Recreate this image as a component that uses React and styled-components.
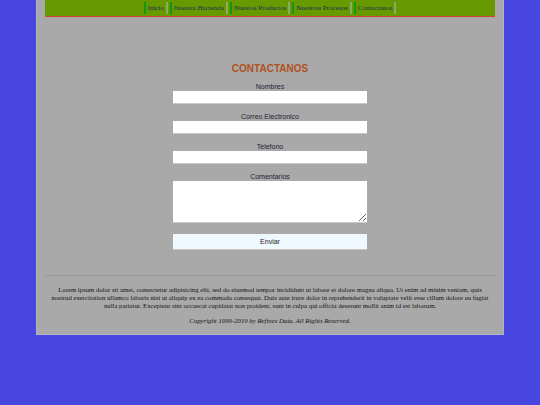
import React from "react";
import styled, { createGlobalStyle } from "styled-components";

const GlobalStyle = createGlobalStyle`
  body {
    margin: 0;
    background: #4747df;
  }
`;

//page frame
const Page = styled.div`
  width: 450px;
  height: 334px;
  margin: 0 auto;
  padding: 0 8px;
  background: #a9a9a9;
  border: 1px solid #b4b4c8;
  border-top: none;
  box-sizing: content-box;
  display: flex;
  flex-direction: column;
`;

const NavBar = styled.nav`
  height: 16px;
  background: #669a00;
  border-bottom: 1px solid #d2452a;
  display: flex;
  justify-content: center;
  align-items: center;
`;

const NavItem = styled.a`
  font-family: "Liberation Serif", serif;
  font-size: 7px;
  line-height: 12px;
  color: #1c2a5a;
  text-decoration: none;
  padding: 0 2px;
  margin: 0 1px;
  border-left: 2px solid #0a9a0a;
  border-right: 2px solid #92a86a;
`;

const Form = styled.form`
  width: 194px;
  margin: 46px auto 0;
  display: flex;
  flex-direction: column;
  align-items: stretch;
`;

const Title = styled.h2`
  margin: 0 0 8px;
  font-family: "Liberation Sans", Arial, sans-serif;
  font-size: 10px;
  line-height: 12px;
  font-weight: bold;
  color: #b1501c;
  text-align: center;
`;

const Label = styled.label`
  font-family: "Liberation Sans", Arial, sans-serif;
  font-size: 7px;
  line-height: 8px;
  color: #1e1e36;
  text-align: center;
`;

const Input = styled.input`
  height: 13px;
  margin: 0 0 9px;
  padding: 0;
  border: none;
  border-bottom: 1px solid #c8c8c8;
  background: #fff;
  box-sizing: border-box;
`;

const TextArea = styled.textarea`
  height: 42px;
  margin: 0 0 11px;
  padding: 0;
  border: none;
  border-bottom: 1px solid #c8c8c8;
  background: #fff;
  box-sizing: border-box;
`;

const Button = styled.button`
  height: 16px;
  padding: 0;
  border: none;
  border-bottom: 1px solid #c8c8c8;
  background: #f0f8ff;
  font-family: "Liberation Sans", Arial, sans-serif;
  font-size: 7px;
  color: #222;
`;

const Rule = styled.hr`
  margin: 25px 0 0;
  border: none;
  border-top: 1px solid #999;
`;

const Footer = styled.footer`
  padding: 10px 4px 0;
  text-align: center;
  font-family: "Liberation Serif", serif;
  color: #141414;
`;

const FooterText = styled.p`
  margin: 0;
  font-size: 6.75px;
  line-height: 8px;
  font-style: ${(p) => (p.italic ? "italic" : "normal")};
  margin-top: ${(p) => (p.italic ? "7px" : "0")};
`;

const links = [
  "Inicio",
  "Nuestra Hacienda",
  "Nuestos Productos",
  "Nuestros Procesos",
  "Contactanos",
];

const App = () => {
  return (
    <>
      <GlobalStyle />
      <Page>
        <NavBar>
          {links.map((l) => (
            <NavItem key={l} href="#">
              {l}
            </NavItem>
          ))}
        </NavBar>
        <Form onSubmit={(e) => e.preventDefault()}>
          <Title>CONTACTANOS</Title>
          <Label>Nombres</Label>
          <Input type="text" />
          <Label>Correo Electronico</Label>
          <Input type="text" />
          <Label>Telefono</Label>
          <Input type="text" />
          <Label>Comentarios</Label>
          <TextArea />
          <Button type="submit">Enviar</Button>
        </Form>
        <Rule />
        <Footer>
          <FooterText>
            Lorem ipsum dolor sit amet, consectetur adipisicing elit, sed do
            eiusmod tempor incididunt ut labore et dolore magna aliqua. Ut enim
            ad minim veniam, quis nostrud exercitation ullamco laboris nisi ut
            aliquip ex ea commodo consequat. Duis aute irure dolor in
            reprehenderit in voluptate velit esse cillum dolore eu fugiat nulla
            pariatur. Excepteur sint occaecat cupidatat non proident, sunt in
            culpa qui officia deserunt mollit anim id est laborum.
          </FooterText>
          <FooterText italic>
            Copyright 1999-2019 by Refines Data. All Rights Reserved.
          </FooterText>
        </Footer>
      </Page>
    </>
  );
};

export default App;
